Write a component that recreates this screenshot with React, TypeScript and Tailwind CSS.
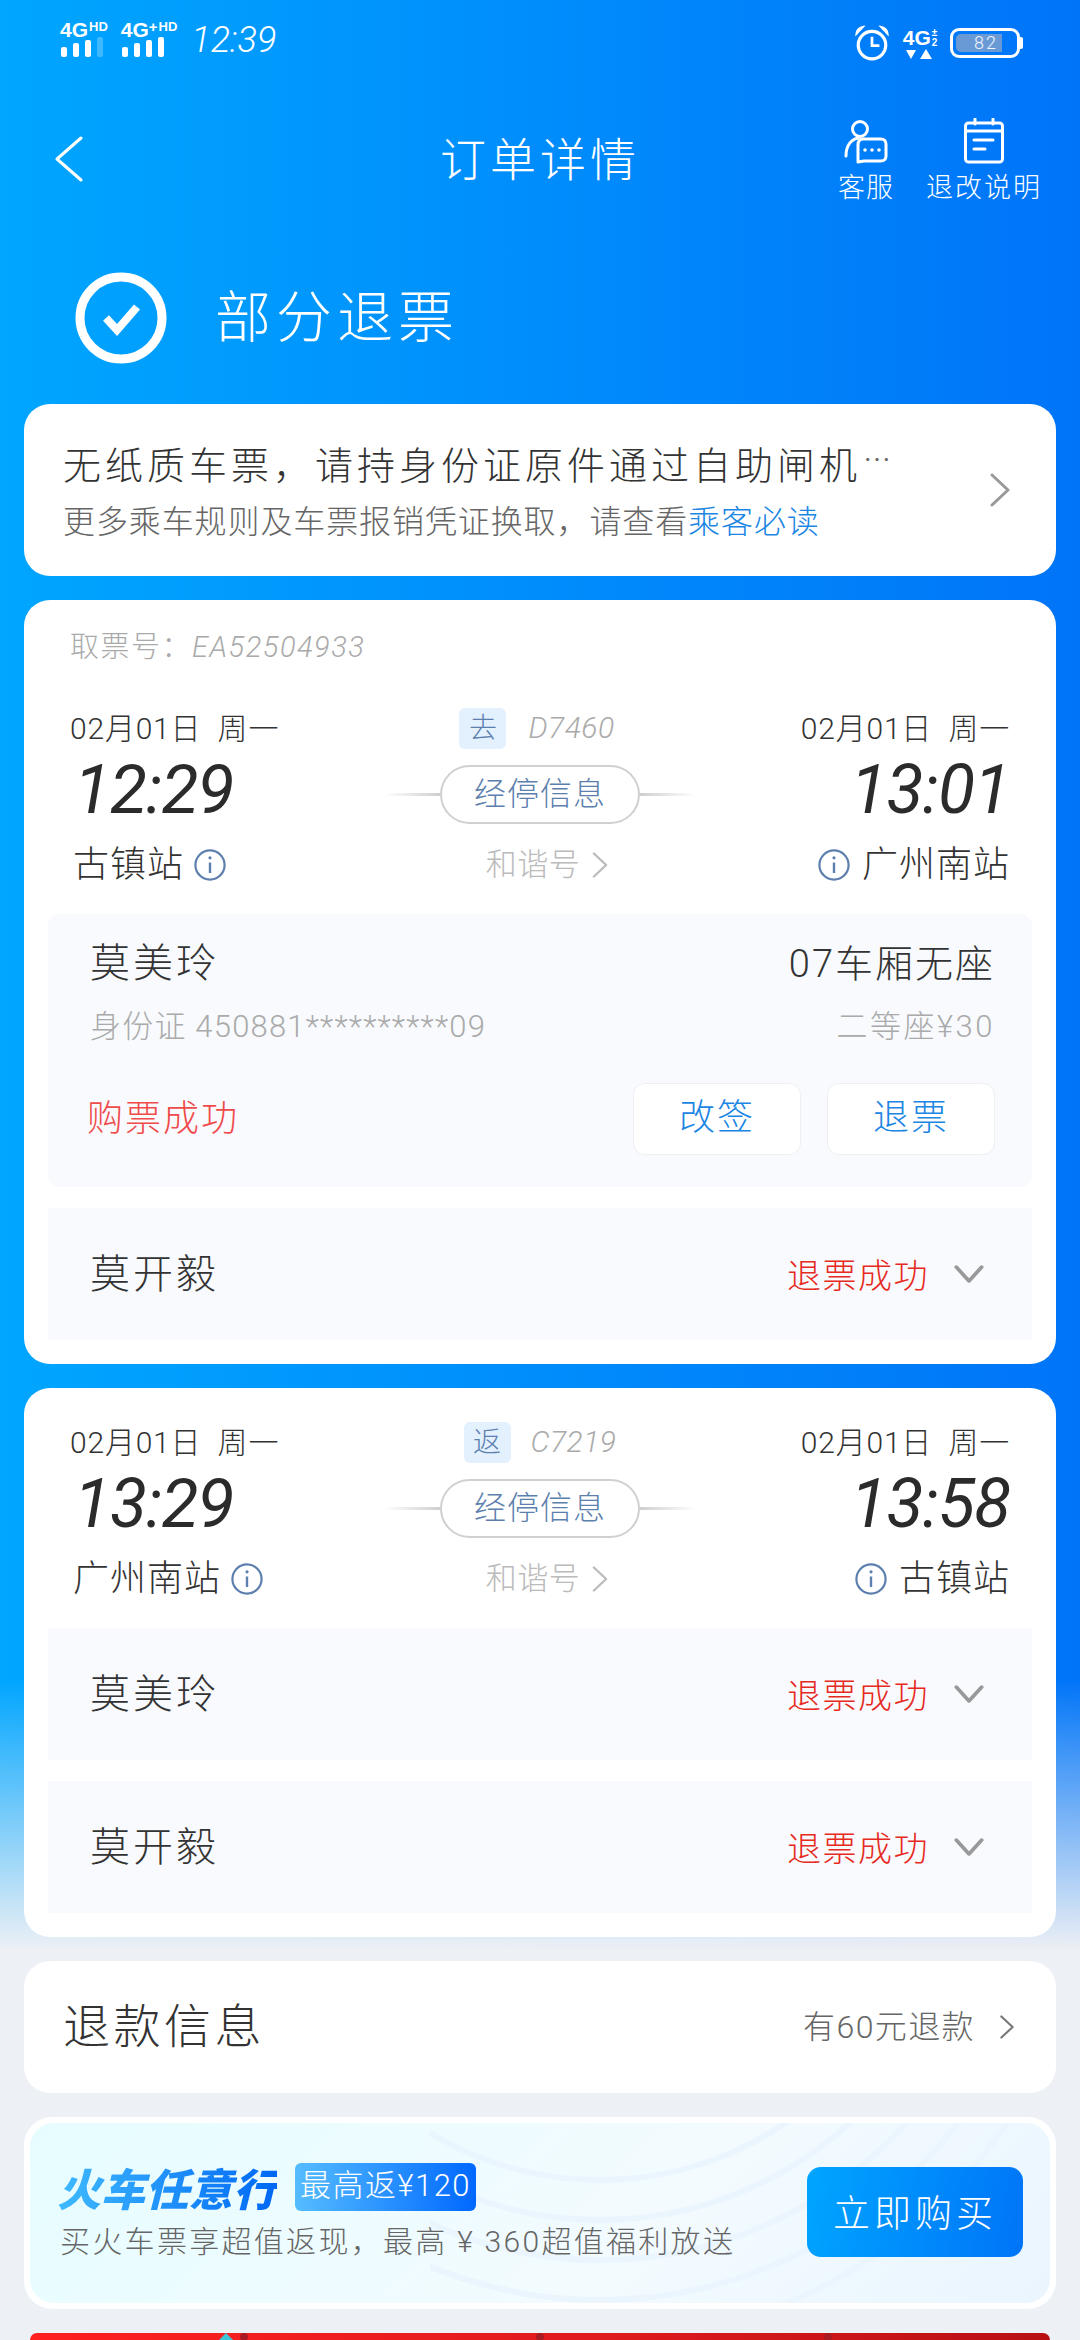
import React from "react";

const Chevron = ({ className, dir = "right" }: { className: string; dir?: "right" | "left" | "down" }) => {
  const d = dir === "right" ? "M2 2 L18 17 L2 32" : dir === "left" ? "M27 2 L3 23 L27 44" : "M2 2 L14 15 L26 2";
  const box = dir === "right" ? "0 0 20 34" : dir === "left" ? "0 0 30 46" : "0 0 28 17";
  return (
    <svg viewBox={box} className={className} fill="none" stroke="currentColor" strokeWidth={dir === "down" ? 3.5 : 3} strokeLinecap="round" strokeLinejoin="round">
      <path d={d} />
    </svg>
  );
};

const Info = () => (
  <svg viewBox="0 0 32 32" className="w-[32px] h-[32px] shrink-0" fill="none" stroke="#5c7fae" strokeWidth="2.2">
    <circle cx="16" cy="16" r="14.6" />
    <path d="M16 13.5 V24" strokeWidth="2.4" />
    <circle cx="16" cy="8.8" r="1.6" fill="#5c7fae" stroke="none" />
  </svg>
);

const Bars = ({ dim }: { dim?: boolean }) => (
  <div className="flex items-end gap-[6px] h-[20px]">
    <div className="w-[6px] h-[10px] rounded-[2px] bg-white" />
    <div className="w-[6px] h-[14px] rounded-[2px] bg-white" />
    <div className="w-[6px] h-[17px] rounded-[2px] bg-white" />
    <div className={dim ? "w-[6px] h-[20px] rounded-[2px] bg-white/25" : "w-[6px] h-[20px] rounded-[2px] bg-white"} />
  </div>
);

const Signal = ({ plus }: { plus?: boolean }) => (
  <div className="flex flex-col">
    <div className="flex items-start h-[16px] text-white font-bold font-['Liberation_Sans',sans-serif]">
      <span className="text-[21px] leading-[17px] -ml-[1px]">4G</span>
      {plus && <span className="text-[15px] leading-[12px]">+</span>}
      <span className="text-[13px] leading-[11px] ml-[1px]">HD</span>
    </div>
    <Bars dim={!plus} />
  </div>
);

const StatusBar = () => (
  <div className="h-[80px] pt-[21px] pl-[61px] pr-[57px] flex justify-between items-start text-white">
    <div className="flex items-start gap-[14px]">
      <Signal />
      <Signal plus />
      <span className="mt-[1px] text-[36px] leading-[36px] font-light italic font-['Roboto',sans-serif]">12:39</span>
    </div>
    <div className="flex items-center gap-[12px] pt-[4px]">
      <svg viewBox="0 0 34 34" className="w-[36px] h-[36px]" fill="none" stroke="white" strokeWidth="3">
        <circle cx="17" cy="19" r="13" />
        <path d="M17 11 V19.5 H24" strokeWidth="2.6" />
        <path d="M2 9 C2 5 5 2 9 1.5 Z M32 9 C32 5 29 2 25 1.5 Z" fill="white" strokeWidth="1.5" />
      </svg>
      <div className="flex flex-col items-center w-[36px]">
        <div className="flex items-start h-[20px] text-white font-bold font-['Liberation_Sans',sans-serif]">
          <span className="text-[21px] leading-[20px]">4G</span>
          <span className="text-[10px] leading-[10px] ml-[1px]">±<br />2</span>
        </div>
        <svg viewBox="0 0 28 10" className="w-[28px] h-[10px] mt-[1px]" fill="white">
          <path d="M5 10 L0 1 H10 Z M20 0 L26 10 H14 Z" />
        </svg>
      </div>
      <div className="flex items-center">
        <div className="relative w-[70px] h-[30px] rounded-[9px] border-[3px] border-white p-[3px]">
          <div className="h-full w-[46px] rounded-l-[5px] bg-[#6a9ad6]" />
          <span className="absolute left-[21px] top-[1px] text-[18px] leading-[22px] text-white/90 font-light font-['Roboto',sans-serif] tracking-[2px]">82</span>
        </div>
        <div className="w-[3px] h-[12px] rounded-r-[2px] bg-white" />
      </div>
    </div>
  </div>
);

const NavBar = () => (
  <div className="h-[132px] flex items-start text-white">
    <div className="w-[396px] pl-[54px] pt-[56px]">
      <Chevron dir="left" className="w-[30px] h-[46px]" />
    </div>
    <div className="w-[288px] pt-[49px] text-center text-[46px] leading-[54px] tracking-[4px] font-light">订单详情</div>
    <div className="flex-1 flex pl-[154px] pt-[40px]">
      <div className="w-[56px] flex flex-col items-center">
        <svg viewBox="0 0 44 44" className="w-[44px] h-[44px]" fill="none" stroke="white" strokeWidth="3">
          <circle cx="16" cy="9" r="7.5" />
          <path d="M2 36 C2 27 6 20 14 18" strokeLinecap="round" />
          <path d="M14 42 V25 C14 21 16 19 19 19 H37 C40 19 42 21 42 24 V36 C42 39 40 41 37 41 H20 Z" strokeLinejoin="round" />
          <circle cx="21" cy="30" r="1.8" fill="white" stroke="none" />
          <circle cx="28" cy="30" r="1.8" fill="white" stroke="none" />
          <circle cx="35" cy="30" r="1.8" fill="white" stroke="none" />
        </svg>
        <span className="mt-[7px] text-[27px] leading-[30px] whitespace-nowrap font-light tracking-[1px]">客服</span>
      </div>
      <div className="ml-[32px] w-[116px] flex flex-col items-center">
        <svg viewBox="0 0 40 46" className="w-[40px] h-[46px] -mt-[2px]" fill="none" stroke="white" strokeWidth="3">
          <rect x="1.5" y="5" width="37" height="39" rx="3" />
          <path d="M1.5 13 H38.5" />
          <path d="M11 1 V6 M29 1 V6" strokeLinecap="round" />
          <path d="M10 22 H29 M10 31 H21" strokeLinecap="round" />
        </svg>
        <span className="mt-[7px] text-[27px] leading-[30px] tracking-[2px] whitespace-nowrap font-light">退改说明</span>
      </div>
    </div>
  </div>
);

const OrderStatus = () => (
  <div className="h-[192px] pl-[75px] pt-[60px] flex items-start text-white">
    <svg viewBox="0 0 92 92" className="w-[92px] h-[92px]" fill="none">
      <circle cx="46" cy="46" r="41" stroke="white" strokeWidth="9" />
      <path d="M31 46 L42 58 L62 35" stroke="white" strokeWidth="8" />
    </svg>
    <span className="ml-[48px] mt-[7px] text-[56px] leading-[68px] tracking-[5px] font-light">部分退票</span>
  </div>
);

const Notice = () => (
  <div className="mx-[24px] h-[172px] rounded-[26px] bg-white pl-[39px] pr-[46px] flex items-center justify-between">
    <div className="flex flex-col -mt-[4px]">
      <div className="flex items-baseline text-[38px] leading-[50px] tracking-[4px] text-[#333] font-light whitespace-nowrap">
        无纸质车票，请持身份证原件通过自助闸机
        <span className="ml-[2px] text-[28px] tracking-[0px] text-[#666] -translate-y-[8px]">…</span>
      </div>
      <div className="mt-[7px] text-[32px] leading-[40px] tracking-[0.9px] text-[#666] font-light whitespace-nowrap">
        更多乘车规则及车票报销凭证换取，请查看<span className="text-[#1b86e3]">乘客必读</span>
      </div>
    </div>
    <Chevron className="w-[20px] h-[34px] text-[#999] shrink-0" />
  </div>
);

type LegProps = {
  date: string;
  tag: string;
  train: string;
  depart: string;
  arrive: string;
  from: string;
  to: string;
};

const Leg = ({ date, tag, train, depart, arrive, from, to }: LegProps) => (
  <div className="grid grid-cols-[1fr_320px_1fr] grid-rows-[40px_84px_66px] px-[46px] font-['Roboto','Noto_Sans_CJK_SC',sans-serif] font-light">
    <div className="flex items-center text-[30px] tracking-[0.8px] text-[#333] whitespace-pre">{date}</div>
    <div className={tag === "返" ? "flex items-center justify-center gap-[20px]" : "flex items-center justify-center gap-[22px] -translate-x-[3px]"}>
      <span className="w-[47px] h-[41px] rounded-[6px] bg-[#e3f0fd] text-[#5c7fae] text-[28px] leading-[41px] text-center">{tag}</span>
      <span className="text-[30px] leading-[40px] italic tracking-[0.5px] text-[#aaa]">{train}</span>
    </div>
    <div className="flex items-center justify-end text-[30px] tracking-[0.8px] text-[#333] whitespace-pre">{date}</div>

    <div className="flex items-center pl-[4px] text-[68px] leading-[84px] tracking-[-1px] font-normal italic text-[#2b2b2b]">{depart}</div>
    <div className="flex items-start pt-[17px] justify-center">
      <div className="w-[56px] h-[3px] shrink-0 mt-[28px] bg-[linear-gradient(to_right,transparent,#cfcfcf)]" />
      <div className="w-[200px] h-[59px] shrink-0 rounded-full border-2 border-[#d0d0d0] bg-white text-center text-[32px] leading-[55px] tracking-[1px] text-[#5c7fae]">经停信息</div>
      <div className="w-[56px] h-[3px] shrink-0 mt-[28px] bg-[linear-gradient(to_left,transparent,#cfcfcf)]" />
    </div>
    <div className="flex items-center justify-end text-[68px] leading-[84px] tracking-[-1px] font-normal italic text-[#2b2b2b]">{arrive}</div>

    <div className="flex items-center gap-[10px] pl-[3px] text-[36px] tracking-[1px] text-[#333] whitespace-nowrap">
      {from}
      <Info />
    </div>
    <div className="flex items-center justify-center gap-[12px] pl-[14px] text-[31px] tracking-[0.5px] text-[#bbb]">
      和谐号
      <Chevron className="w-[16px] h-[26px] text-[#bbb]" />
    </div>
    <div className="flex items-center justify-end gap-[12px] text-[36px] tracking-[1px] text-[#333] whitespace-nowrap">
      <Info />
      {to}
    </div>
  </div>
);

const Refunded = ({ name }: { name: string }) => (
  <div className="h-[132px] bg-[#f8fafe] pl-[42px] pr-[48px] flex items-center justify-between font-light">
    <span className="text-[40px] leading-[50px] tracking-[3px] text-[#333] -translate-y-[3px]">{name}</span>
    <div className="flex items-center gap-[25px] text-[#e62a22]">
      <span className="text-[34px] leading-[44px] tracking-[1.5px]">退票成功</span>
      <Chevron dir="down" className="w-[30px] h-[18px] text-[#999]" />
    </div>
  </div>
);

const Boarding = () => (
  <div className="h-[273px] rounded-[12px] bg-[#f8fafe] pt-[30px] pl-[42px] pr-[37px] pb-[32px] font-['Roboto','Noto_Sans_CJK_SC',sans-serif] font-light">
    <div className="flex justify-between items-center h-[40px]">
      <span className="text-[40px] tracking-[3px] text-[#333]">莫美玲</span>
      <span className="text-[38px] tracking-[2px] text-[#333]">07车厢无座</span>
    </div>
    <div className="mt-[23px] flex justify-between items-center h-[40px] text-[31px] text-[#aaa] whitespace-nowrap">
      <span className="tracking-[1.2px]">身份证 450881**********09</span>
      <span className="tracking-[2.5px]">二等座¥30</span>
    </div>
    <div className="mt-[36px] flex items-center justify-between h-[72px]">
      <span className="-ml-[3px] text-[36px] tracking-[2px] text-[#f04b4b]">购票成功</span>
      <div className="flex gap-[26px]">
        <div className="w-[168px] h-[72px] rounded-[12px] bg-white border border-[#eeeff2] text-center text-[36px] leading-[68px] tracking-[2px] text-[#1b86e3]">改签</div>
        <div className="w-[168px] h-[72px] rounded-[12px] bg-white border border-[#eeeff2] text-center text-[36px] leading-[68px] tracking-[2px] text-[#1b86e3]">退票</div>
      </div>
    </div>
  </div>
);

const Promo = () => (
  <div className="mt-[24px] mx-[24px] h-[192px] rounded-[28px] bg-white p-[6px]">
    <div className="relative h-full rounded-[24px] overflow-hidden bg-[linear-gradient(135deg,#e6fdff,#f3fbff_60%,#eaf5fe)] pl-[27px] pr-[27px] flex items-center justify-between">
      <svg viewBox="400 0 620 180" className="absolute top-0 left-[400px] w-[620px] h-[180px]" fill="none" stroke="#eaf5fe" strokeWidth="6">
        <circle cx="570" cy="-273" r="330" />
        <circle cx="570" cy="-273" r="370" />
        <circle cx="570" cy="-273" r="410" />
        <circle cx="570" cy="-273" r="450" />
        <circle cx="570" cy="-273" r="490" />
      </svg>
      <div className="relative flex flex-col -mt-[3px]">
        <div className="flex items-center gap-[18px]">
          <span className="text-[44px] leading-[50px] font-black italic tracking-[0px] text-transparent bg-clip-text bg-[linear-gradient(to_right,#3fbaff,#0068f5)]">火车任意行</span>
          <span className="w-[181px] h-[48px] rounded-[6px] bg-[linear-gradient(to_right,#55bcff,#0068ff)] text-center text-[31px] leading-[46px] tracking-[1.5px] text-white font-['Roboto','Noto_Sans_CJK_SC',sans-serif] font-light whitespace-nowrap">最高返¥120</span>
        </div>
        <div className="mt-[10px] ml-[3px] text-[30px] leading-[40px] tracking-[2.3px] text-[#666] font-['Roboto','Noto_Sans_CJK_SC',sans-serif] font-light whitespace-nowrap">买火车票享超值返现，最高 ¥ 360超值福利放送</div>
      </div>
      <div className="relative w-[216px] shrink-0 h-[90px] rounded-[14px] bg-[linear-gradient(100deg,#00a5ff,#0074f8)] text-center text-[37px] leading-[88px] tracking-[4px] text-white font-light -mt-[2px]">立即购买</div>
    </div>
  </div>
);

const RedBanner = () => (
  <div className="relative mt-[24px] mx-[30px] h-[7px] overflow-hidden rounded-t-[20px] bg-[linear-gradient(to_right,#ff2020,#e01a1e_55%,#b81014)]">
    <div className="absolute left-[186px] top-0 w-0 h-0 border-x-[10px] border-x-transparent border-b-[10px] border-b-[#3fc4d8]" />
    <div className="absolute left-[210px] top-0 w-[8px] h-[8px] rounded-full bg-[#a91a22]" />
    <div className="absolute left-[506px] top-0 w-[8px] h-[8px] rounded-full bg-[#a91a22]" />
    <div className="absolute left-[794px] top-0 w-[8px] h-[8px] rounded-full bg-[#a91a22]" />
  </div>
);

export default function App() {
  return (
    <div className="w-[1080px] h-[2340px] overflow-hidden font-['Noto_Sans_CJK_SC',sans-serif] bg-[linear-gradient(to_bottom,transparent_1680px,#edf0f5_1950px),linear-gradient(to_right,#00a6ff,#0074f8)]">
      <StatusBar />
      <NavBar />
      <OrderStatus />
      <Notice />

      <div className="mt-[24px] mx-[24px] h-[764px] rounded-[26px] bg-white pt-[28px] px-[24px] pb-[24px]">
        <div className="h-[40px] mb-[40px] pl-[22px] flex items-center text-[29px] text-[#aaa] font-['Roboto','Noto_Sans_CJK_SC',sans-serif] font-light tracking-[1.5px]">
          取票号：<span className="italic">EA52504933</span>
        </div>
        <div className="-mx-[24px]">
          <Leg date="02月01日  周一" tag="去" train="D7460" depart="12:29" arrive="13:01" from="古镇站" to="广州南站" />
        </div>
        <div className="mt-[16px] flex flex-col gap-[21px]">
          <Boarding />
          <Refunded name="莫开毅" />
        </div>
      </div>

      <div className="mt-[24px] mx-[24px] h-[549px] rounded-[26px] bg-white pt-[34px] px-[24px] pb-[24px]">
        <div className="-mx-[24px]">
          <Leg date="02月01日  周一" tag="返" train="C7219" depart="13:29" arrive="13:58" from="广州南站" to="古镇站" />
        </div>
        <div className="mt-[16px] flex flex-col gap-[21px]">
          <Refunded name="莫美玲" />
          <Refunded name="莫开毅" />
        </div>
      </div>

      <div className="mt-[24px] mx-[24px] h-[132px] rounded-[26px] bg-white pl-[39px] pr-[41px] flex items-center justify-between font-light">
        <span className="text-[47px] leading-[56px] tracking-[3.5px] text-[#333] -translate-y-[4px]">退款信息</span>
        <div className="flex items-center gap-[24px]">
          <span className="text-[32px] leading-[42px] text-[#666] font-['Roboto','Noto_Sans_CJK_SC',sans-serif] tracking-[1.4px]">有60元退款</span>
          <Chevron className="w-[16px] h-[24px] text-[#777]" />
        </div>
      </div>

      <Promo />
      <RedBanner />
    </div>
  );
}
